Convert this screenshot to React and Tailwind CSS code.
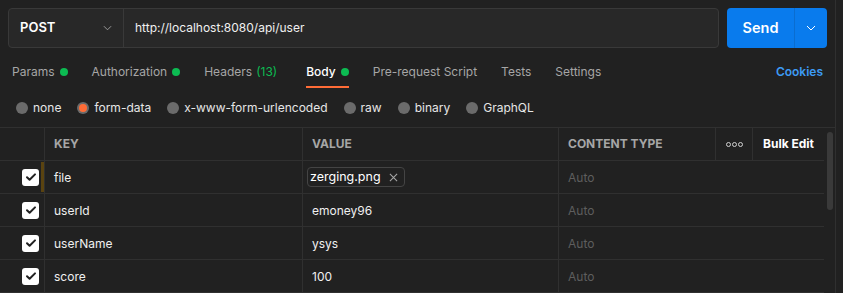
import React from 'react';

const tabs = [
  { label: 'Params', dot: true },
  { label: 'Authorization', dot: true },
  { label: 'Headers', count: '(13)' },
  { label: 'Body', dot: true, active: true },
  { label: 'Pre-request Script' },
  { label: 'Tests' },
  { label: 'Settings' },
];

const bodyTypes = ['none', 'form-data', 'x-www-form-urlencoded', 'raw', 'binary', 'GraphQL'];

const rows = [
  { key: 'file', file: 'zerging.png' },
  { key: 'userId', value: 'emoney96' },
  { key: 'userName', value: 'ysys' },
  { key: 'score', value: '100' },
];

const Chevron = ({ className }) => (
  <svg viewBox="0 0 10 6" className={className} fill="none" stroke="currentColor" strokeWidth="1">
    <path d="M1 1l4 4 4-4" />
  </svg>
);

const Check = () => (
  <div className="w-[17px] h-[17px] rounded-[3px] bg-white flex items-center justify-center">
    <svg viewBox="0 0 12 12" className="w-[12px] h-[12px]" fill="none" stroke="#212121" strokeWidth="2" strokeLinecap="round" strokeLinejoin="round">
      <path d="M2 6.2l2.6 2.6L10 3.4" />
    </svg>
  </div>
);

const Dot = () => <span className="w-[8px] h-[8px] rounded-full bg-[#0cbb52] ml-[5px] inline-block" />;

export default function App() {
  return (
    <div className="w-[843px] h-[293px] bg-[#212121] overflow-hidden flex text-[12px] text-white" style={{ fontFamily: 'Inter, "Noto Sans", sans-serif' }}>
      <div className="w-[836px] border-r border-[#303030] flex flex-col">
        {/* url bar */}
        <div className="flex pt-[8px] px-[8px] h-[48px]">
          <div className="flex flex-1 h-[40px] rounded-[4px] border border-[#393939] bg-[#282828]">
            <div className="w-[115px] flex items-center justify-between pl-[11px] pr-[11px] border-r border-[#393939]">
              <span className="font-semibold text-[13px] text-white">POST</span>
              <Chevron className="w-[9px] h-[6px] text-[#a6a6a6]" />
            </div>
            <div className="flex items-center pl-[11px] text-[12px] text-[#f0f0f0]">http://localhost:8080/api/user</div>
          </div>
          <div className="ml-[8px] w-[100px] h-[40px] rounded-[4px] bg-[#097bed] flex">
            <div className="w-[68px] flex items-center justify-center font-semibold text-[14.5px] text-white border-r border-[#0a6dd0]">Send</div>
            <div className="flex-1 flex items-center justify-center">
              <Chevron className="w-[10px] h-[6px] text-white" />
            </div>
          </div>
        </div>

        {/* tabs */}
        <div className="flex items-stretch justify-between px-[12px] h-[41px]">
          <div className="flex items-stretch gap-[24px]">
            {tabs.map((t) => (
              <div key={t.label} className={`relative flex items-center pt-[8px] ${t.count ? 'mr-[5px]' : ''}`}>
                <span className={t.active ? 'text-white font-medium' : 'text-[#a6a6a6]'}>{t.label}</span>
                {t.count && <span className="ml-[4px] text-[#0cbb52]">{t.count}</span>}
                {t.dot && <Dot />}
                {t.active && <div className="absolute left-0 right-0 bottom-[0px] h-[2px] bg-[#ff6c37]" />}
              </div>
            ))}
          </div>
          <div className="flex items-center pt-[8px] text-[#3d9bf4] font-semibold">Cookies</div>
        </div>

        {/* body type radios */}
        <div className="flex items-center gap-[16px] px-[16px] h-[38px] pt-[2px]">
          {bodyTypes.map((b) => (
            <div key={b} className="flex items-center gap-[5px]">
              {b === 'form-data' ? (
                <span className="w-[12px] h-[12px] rounded-full bg-[#6b6b6b] flex items-center justify-center">
                  <span className="w-[8px] h-[8px] rounded-full bg-[#ff6c37]" />
                </span>
              ) : (
                <span className="w-[12px] h-[12px] rounded-full bg-[#6b6b6b]" />
              )}
              <span className="text-[#e6e6e6]">{b}</span>
            </div>
          ))}
        </div>

        {/* table */}
        <div className="flex-1 flex border-t border-[#303030] mt-[1px]">
          <div className="w-[824px] flex flex-col">
            <div className="flex h-[33px] border-b border-[#303030] text-[12px] font-bold">
              <div className="w-[45px] border-r border-[#303030]" />
              <div className="w-[258px] border-r border-[#303030] flex items-center pl-[9px] text-[#a6a6a6]">KEY</div>
              <div className="w-[256px] border-r border-[#303030] flex items-center pl-[9px] text-[#a6a6a6]">VALUE</div>
              <div className="w-[157px] border-r border-[#303030] flex items-center pl-[9px] text-[#a6a6a6]">CONTENT TYPE</div>
              <div className="w-[37px] border-r border-[#303030] flex items-center justify-center gap-[1px]">
                {[0, 1, 2].map((i) => (
                  <span key={i} className="w-[5px] h-[5px] rounded-full border border-[#d0d0d0]" />
                ))}
              </div>
              <div className="flex-1 flex items-center justify-center text-white">Bulk Edit</div>
            </div>
            {rows.map((r, i) => (
              <div key={r.key} className="flex h-[33px] border-b border-[#303030] text-[12px]">
                <div className="w-[45px] border-r border-[#303030] flex items-center justify-end pr-[5px] relative">
                  <Check />
                  {i === 0 && <div className="absolute right-[0px] top-[1px] bottom-[1px] w-[3px] bg-[#5a4310]" />}
                </div>
                <div className="w-[258px] border-r border-[#303030] flex items-center pl-[9px] pt-[1px] text-[#f0f0f0]">{r.key}</div>
                <div className="w-[256px] border-r border-[#303030] flex items-center pl-[4px] text-[#f0f0f0]">
                  {r.file ? (
                    <div className="flex items-center h-[20px] rounded-[4px] border border-[#444] pl-[2px] pr-[6px] gap-[8px]">
                      <span className="text-white text-[12.5px]">{r.file}</span>
                      <svg viewBox="0 0 10 10" className="w-[9px] h-[9px]" stroke="#a6a6a6" strokeWidth="1.2">
                        <path d="M1 1l8 8M9 1l-8 8" />
                      </svg>
                    </div>
                  ) : (
                    <span className="pl-[5px] pt-[1px]">{r.value}</span>
                  )}
                </div>
                <div className="flex-1 flex items-center pl-[9px] pt-[1px] text-[#5e5e5e]">Auto</div>
              </div>
            ))}
          </div>
          <div className="flex-1 relative">
            <div className="absolute left-[3px] top-[4px] w-[6px] h-[78px] rounded-full bg-[#3a3a3a]" />
          </div>
        </div>
      </div>
    </div>
  );
}
